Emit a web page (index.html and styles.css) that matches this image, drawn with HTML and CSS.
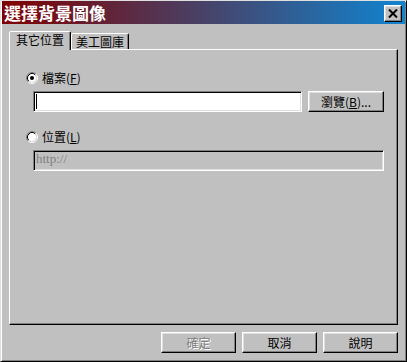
FILE: index.html
```html
<!DOCTYPE html>
<html>
  <head>
    <meta charset="UTF-8" />
    <title>選擇背景圖像</title>
    <link rel="stylesheet" href="styles.css">
  </head>
  <body>
    <div class="window">
      <!-- 標題列 -->
      <div class="titlebar">
        <span class="title">選擇背景圖像</span>
        <button class="close">
          <svg width="10" height="9" viewBox="0 0 10 9">
            <path d="M1 0.5 L9 8.5 M9 0.5 L1 8.5" stroke="#000" stroke-width="2" />
          </svg>
        </button>
      </div>

      <div class="main">
        <!-- 分頁 -->
        <div class="tabs">
          <div class="tab tab-active">其它位置</div>
          <div class="tab">美工圖庫</div>
        </div>

        <div class="panel">
          <div class="radio-row">
            <svg class="radio" width="12" height="12" viewBox="0 0 12 12">
              <circle cx="6" cy="6" r="4.2" fill="#fff" />
              <path d="M2.11 9.89 A5.5 5.5 0 0 1 9.89 2.11" stroke="#808080" fill="none" />
              <path d="M9.89 2.11 A5.5 5.5 0 0 1 2.11 9.89" stroke="#fff" fill="none" />
              <path d="M2.82 9.18 A4.5 4.5 0 0 1 9.18 2.82" stroke="#000" fill="none" />
              <path d="M9.18 2.82 A4.5 4.5 0 0 1 2.82 9.18" stroke="#dfdfdf" fill="none" />
              <circle cx="6" cy="6" r="2" fill="#000" />
            </svg>
            <span>檔案(<u>F</u>)</span>
          </div>
          <div class="field-row">
            <div class="field"><span class="caret"></span></div>
            <button class="btn btn-browse">瀏覽(<u>B</u>)...</button>
          </div>

          <div class="radio-row radio-row-second">
            <svg class="radio" width="12" height="12" viewBox="0 0 12 12">
              <circle cx="6" cy="6" r="4.2" fill="#fff" />
              <path d="M2.11 9.89 A5.5 5.5 0 0 1 9.89 2.11" stroke="#808080" fill="none" />
              <path d="M9.89 2.11 A5.5 5.5 0 0 1 2.11 9.89" stroke="#fff" fill="none" />
              <path d="M2.82 9.18 A4.5 4.5 0 0 1 9.18 2.82" stroke="#000" fill="none" />
              <path d="M9.18 2.82 A4.5 4.5 0 0 1 2.82 9.18" stroke="#dfdfdf" fill="none" />
            </svg>
            <span>位置(<u>L</u>)</span>
          </div>
          <div class="field-row">
            <div class="field field-disabled">http://</div>
          </div>
        </div>

        <!-- 底部按鈕 -->
        <div class="footer">
          <button class="btn btn-disabled">確定</button>
          <button class="btn">取消</button>
          <button class="btn">說明</button>
        </div>
      </div>
    </div>
  </body>
</html>
```

FILE: styles.css
```css
body {
  margin: 0;
  padding: 0;
  background: #c0c0c0;
  overflow: hidden;
  font-family: "Noto Sans CJK TC", "Liberation Sans", sans-serif;
  font-size: 12px;
  color: #000;
}

.window {
  width: 407px;
  height: 362px;
  box-sizing: border-box;
  background: #c0c0c0;
  border: 1px solid;
  border-color: #dfdfdf #000 #000 #dfdfdf;
  box-shadow: inset 1px 1px #fff, inset -1px -1px #808080;
  padding: 0 1px 1px 1px;
  display: flex;
  flex-direction: column;
}

.titlebar {
  height: 23px;
  display: flex;
  align-items: center;
  justify-content: space-between;
  padding: 0 3px 0 2px;
  background: linear-gradient(to right, #800000, #1084d0);
}

.title {
  color: #fff;
  font-weight: bold;
  font-size: 17px;
  line-height: 20px;
}

.close {
  width: 18px;
  height: 17px;
  margin-top: 2px;
  padding: 0;
  box-sizing: border-box;
  background: #c0c0c0;
  border: 1px solid;
  border-color: #fff #000 #000 #fff;
  box-shadow: inset -1px -1px #808080, inset 1px 1px #dfdfdf;
  display: flex;
  align-items: center;
  justify-content: center;
}

.main {
  padding: 7px 7px 0 7px;
  display: flex;
  flex-direction: column;
}

.tabs {
  height: 18px;
  display: flex;
  align-items: flex-end;
}

.tab {
  height: 16px;
  box-sizing: border-box;
  padding: 0 4px;
  border: 1px solid;
  border-bottom: none;
  border-color: #fff #000 transparent #fff;
  border-radius: 2px 2px 0 0;
  box-shadow: inset -1px 0 #808080;
  background: #c0c0c0;
  display: flex;
  align-items: center;
  line-height: 14px;
}

.tab-active {
  height: 19px;
  padding: 0 6px 2px 6px;
  margin-bottom: -1px;
  position: relative;
  z-index: 1;
}

.panel {
  height: 276px;
  box-sizing: border-box;
  border: 1px solid;
  border-color: #fff #000 #000 #fff;
  box-shadow: inset -1px -1px #808080;
  padding: 21px 13px 0 23px;
}

.radio-row {
  height: 14px;
  margin-left: -7px;
  display: flex;
  align-items: center;
  gap: 4px;
  line-height: 14px;
}

.radio-row-second {
  margin-top: 18px;
}

.field-row {
  margin-top: 6px;
  display: flex;
  gap: 6px;
}

.field {
  flex: 1;
  height: 21px;
  box-sizing: border-box;
  background: #fff;
  border: 1px solid;
  border-color: #808080 #fff #fff #808080;
  box-shadow: inset 1px 1px #000, inset -1px -1px #dfdfdf;
  display: flex;
  align-items: center;
  padding-left: 2px;
}

.caret {
  width: 1px;
  height: 15px;
  background: #000;
}

.field-disabled {
  background: #c0c0c0;
  color: #808080;
  font-family: "Liberation Serif", serif;
  font-size: 13px;
  padding: 0 0 3px 2px;
}

.btn {
  width: 75px;
  height: 21px;
  padding: 0;
  box-sizing: border-box;
  background: #c0c0c0;
  border: 1px solid;
  border-color: #fff #000 #000 #fff;
  box-shadow: inset -1px -1px #808080, inset 1px 1px #dfdfdf;
  font-family: inherit;
  font-size: 12px;
  line-height: 14px;
  color: #000;
}

.btn-browse {
  width: 76px;
}

.btn-disabled {
  color: #808080;
  text-shadow: 1px 1px #fff;
}

.footer {
  margin-top: 7px;
  display: flex;
  justify-content: flex-end;
  gap: 6px;
}
```
